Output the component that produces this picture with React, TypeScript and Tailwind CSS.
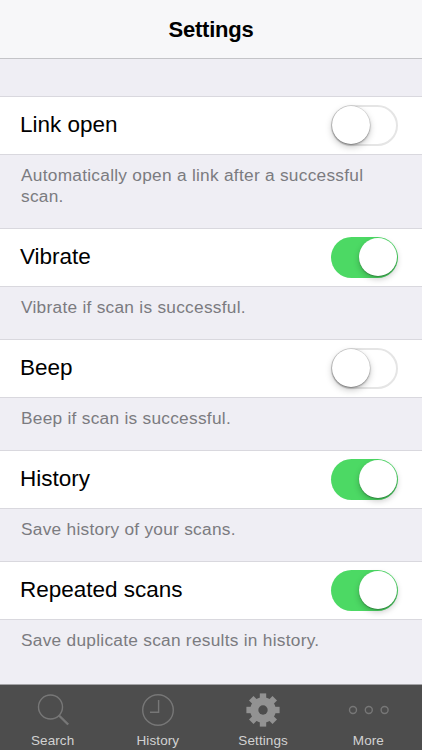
import type { ReactNode } from "react";
import clsx from "clsx";

type Setting = {
  label: string;
  description: string;
  enabled: boolean;
};

const settings: Setting[] = [
  {
    label: "Link open",
    description: "Automatically open a link after a successful scan.",
    enabled: false,
  },
  { label: "Vibrate", description: "Vibrate if scan is successful.", enabled: true },
  { label: "Beep", description: "Beep if scan is successful.", enabled: false },
  { label: "History", description: "Save history of your scans.", enabled: true },
  {
    label: "Repeated scans",
    description: "Save duplicate scan results in history.",
    enabled: true,
  },
];

function Toggle({ on, label }: { on: boolean; label: string }) {
  return (
    <button
      type="button"
      role="switch"
      aria-checked={on}
      aria-label={label}
      className={clsx(
        "flex h-[41px] w-[67px] items-center rounded-full",
        on ? "justify-end bg-[#4cd964] pr-[1.5px]" : "border-2 border-[#e5e5e5] bg-white"
      )}
    >
      <span
        className={clsx(
          "size-[38px] rounded-full bg-white",
          on
            ? "shadow-[0_3px_6px_rgba(0,0,0,0.22),0_1px_1px_rgba(0,0,0,0.25)]"
            : "-ml-px shadow-[0_3px_7px_rgba(0,0,0,0.22),0_1px_2px_rgba(0,0,0,0.35),0_0_0_0.5px_rgba(0,0,0,0.12)]"
        )}
      />
    </button>
  );
}

function SettingRow({ label, description, enabled }: Setting) {
  return (
    <section>
      <div className="flex h-[59px] items-center justify-between border-y border-[#d9d8de] bg-white pr-6 pb-px pl-5">
        <h2 className="text-[22.5px] leading-[34px] text-black">{label}</h2>
        <Toggle on={enabled} label={label} />
      </div>
      <p className="px-[21px] pt-[10px] pb-[21px] text-[17.3px] leading-[21px] tracking-[0.27px] text-[#7b7b80]">
        {description}
      </p>
    </section>
  );
}

function SearchIcon() {
  return (
    <svg width="34" height="34" viewBox="0 0 34 34" fill="none" stroke="#777">
      <circle cx="14.5" cy="14" r="12" strokeWidth="1.4" />
      <path d="M23 22.5 L32.2 31.5" strokeWidth="2.4" />
    </svg>
  );
}

function ClockIcon() {
  return (
    <svg width="34" height="34" viewBox="0 0 34 34" fill="none" stroke="#777" strokeWidth="1.4">
      <circle cx="17" cy="17" r="15.3" />
      <path d="M17.6 7 V19.2 H9" />
    </svg>
  );
}

function GearIcon() {
  return (
    <svg width="34" height="34" viewBox="0 0 34 34" fill="#929292">
      {[0, 45, 90, 135].map((angle) => (
        <rect key={angle} x="13.8" y="0.4" width="6.4" height="33.2" transform={`rotate(${angle} 17 17)`} />
      ))}
      <circle cx="17" cy="17" r="12.8" />
      <circle cx="17" cy="17" r="4.7" fill="#4d4d4d" />
    </svg>
  );
}

function MoreIcon() {
  return (
    <svg width="42" height="34" viewBox="0 0 42 34" fill="none" stroke="#777" strokeWidth="1.4">
      <circle cx="6" cy="17" r="3.5" />
      <circle cx="21.8" cy="17" r="3.5" />
      <circle cx="37.6" cy="17" r="3.5" />
    </svg>
  );
}

function Tab({ label, children }: { label: string; children: ReactNode }) {
  return (
    <a href="#" className="flex w-1/4 flex-col items-center pt-2">
      {children}
      <span className="mt-[6px] text-[13.5px] leading-4 tracking-[0.1px] text-[#d2d2d2]">{label}</span>
    </a>
  );
}

export default function App() {
  return (
    <div className="flex h-[750px] w-[422px] flex-col overflow-hidden bg-[#efeef4] font-['Liberation_Sans',Arial,sans-serif]">
      <header className="flex h-[59px] shrink-0 items-center justify-center border-b border-[#c4c4c8] bg-[#f7f7f9]">
        <h1 className="text-[22px] font-bold tracking-[-0.25px] text-black">Settings</h1>
      </header>

      <main className="flex-1 pt-[37px]">
        {settings.map((setting) => (
          <SettingRow key={setting.label} {...setting} />
        ))}
      </main>

      <nav className="flex h-[66px] shrink-0 border-t border-[#a3a3a6] bg-[#4d4d4d] pr-px">
        <Tab label="Search">
          <SearchIcon />
        </Tab>
        <Tab label="History">
          <ClockIcon />
        </Tab>
        <Tab label="Settings">
          <GearIcon />
        </Tab>
        <Tab label="More">
          <MoreIcon />
        </Tab>
      </nav>
    </div>
  );
}
